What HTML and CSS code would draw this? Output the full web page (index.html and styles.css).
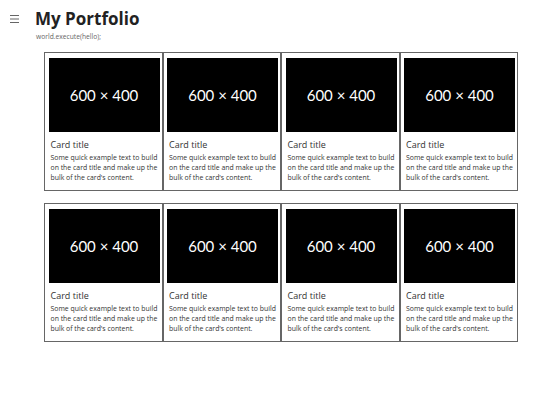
FILE: index.html
```html
<!DOCTYPE html>
<html lang="en">
<head>
<meta charset="utf-8">
<title>My Portfolio</title>
<link rel="stylesheet" href="styles.css">
</head>
<body>
<header class="topbar">
  <button class="menu" aria-label="Menu">
    <svg width="9" height="8" viewBox="0 0 9 8"><path d="M0 0.5H9M0 4H9M0 7.5H9" stroke="#666" stroke-width="1"/></svg>
  </button>
  <div class="brand">
    <h1 class="title">My Portfolio</h1>
    <p class="subtitle">world.execute(hello);</p>
  </div>
</header>
<main class="content">
  <section class="card-group">
    <div class="card"><div class="card-img">600 × 400</div><div class="card-body"><h5 class="card-title">Card title</h5><p class="card-text">Some quick example text to build<br>on the card title and make up the<br>bulk of the card's content.</p></div></div>
    <div class="card"><div class="card-img">600 × 400</div><div class="card-body"><h5 class="card-title">Card title</h5><p class="card-text">Some quick example text to build<br>on the card title and make up the<br>bulk of the card's content.</p></div></div>
    <div class="card"><div class="card-img">600 × 400</div><div class="card-body"><h5 class="card-title">Card title</h5><p class="card-text">Some quick example text to build<br>on the card title and make up the<br>bulk of the card's content.</p></div></div>
    <div class="card"><div class="card-img">600 × 400</div><div class="card-body"><h5 class="card-title">Card title</h5><p class="card-text">Some quick example text to build<br>on the card title and make up the<br>bulk of the card's content.</p></div></div>
  </section>
  <section class="card-group">
    <div class="card"><div class="card-img">600 × 400</div><div class="card-body"><h5 class="card-title">Card title</h5><p class="card-text">Some quick example text to build<br>on the card title and make up the<br>bulk of the card's content.</p></div></div>
    <div class="card"><div class="card-img">600 × 400</div><div class="card-body"><h5 class="card-title">Card title</h5><p class="card-text">Some quick example text to build<br>on the card title and make up the<br>bulk of the card's content.</p></div></div>
    <div class="card"><div class="card-img">600 × 400</div><div class="card-body"><h5 class="card-title">Card title</h5><p class="card-text">Some quick example text to build<br>on the card title and make up the<br>bulk of the card's content.</p></div></div>
    <div class="card"><div class="card-img">600 × 400</div><div class="card-body"><h5 class="card-title">Card title</h5><p class="card-text">Some quick example text to build<br>on the card title and make up the<br>bulk of the card's content.</p></div></div>
  </section>
</main>
</body>
</html>
```
FILE: styles.css
```css
* { box-sizing: border-box; }
html, body { margin: 0; padding: 0; background: #fff; }
body { font-family: "Open Sans", "Liberation Sans", sans-serif; color: #333; }

.topbar {
  display: flex;
  align-items: flex-start;
  padding: 8px 0 0 10px;
  height: 52px;
}
.menu {
  border: 0;
  background: none;
  padding: 0;
  margin: 7px 16px 0 0;
  width: 9px;
  height: 8px;
  display: flex;
}
.brand { display: flex; flex-direction: column; }
.title {
  margin: 0;
  font-size: 17px;
  font-weight: 700;
  line-height: 22px;
  color: #222;
}
.subtitle {
  margin: 3px 0 0 1px;
  font-size: 6.7px;
  line-height: 8px;
  color: #666;
}

.content {
  margin-left: 44px;
  width: 474px;
  display: flex;
  flex-direction: column;
  gap: 12px;
}
.card-group { display: flex; }
.card {
  flex: 1 1 0;
  min-width: 0;
  border: 1px solid #666;
  padding: 5px 2px 0 3.5px;
  height: 139px;
}
.card-img {
  width: 100%;
  height: 74px;
  background: #000;
  color: #fff;
  font-family: Lato, "Open Sans", sans-serif;
  font-size: 15px;
  display: flex;
  align-items: center;
  justify-content: center;
}
.card-body { padding: 7px 0 0 2px; }
.card-title {
  margin: 0 0 2px;
  font-size: 9px;
  font-weight: 400;
  line-height: 12px;
  color: #333;
}
.card-text {
  margin: 0;
  font-size: 6.9px;
  line-height: 10px;
  color: #333;
  white-space: nowrap;
}
```
